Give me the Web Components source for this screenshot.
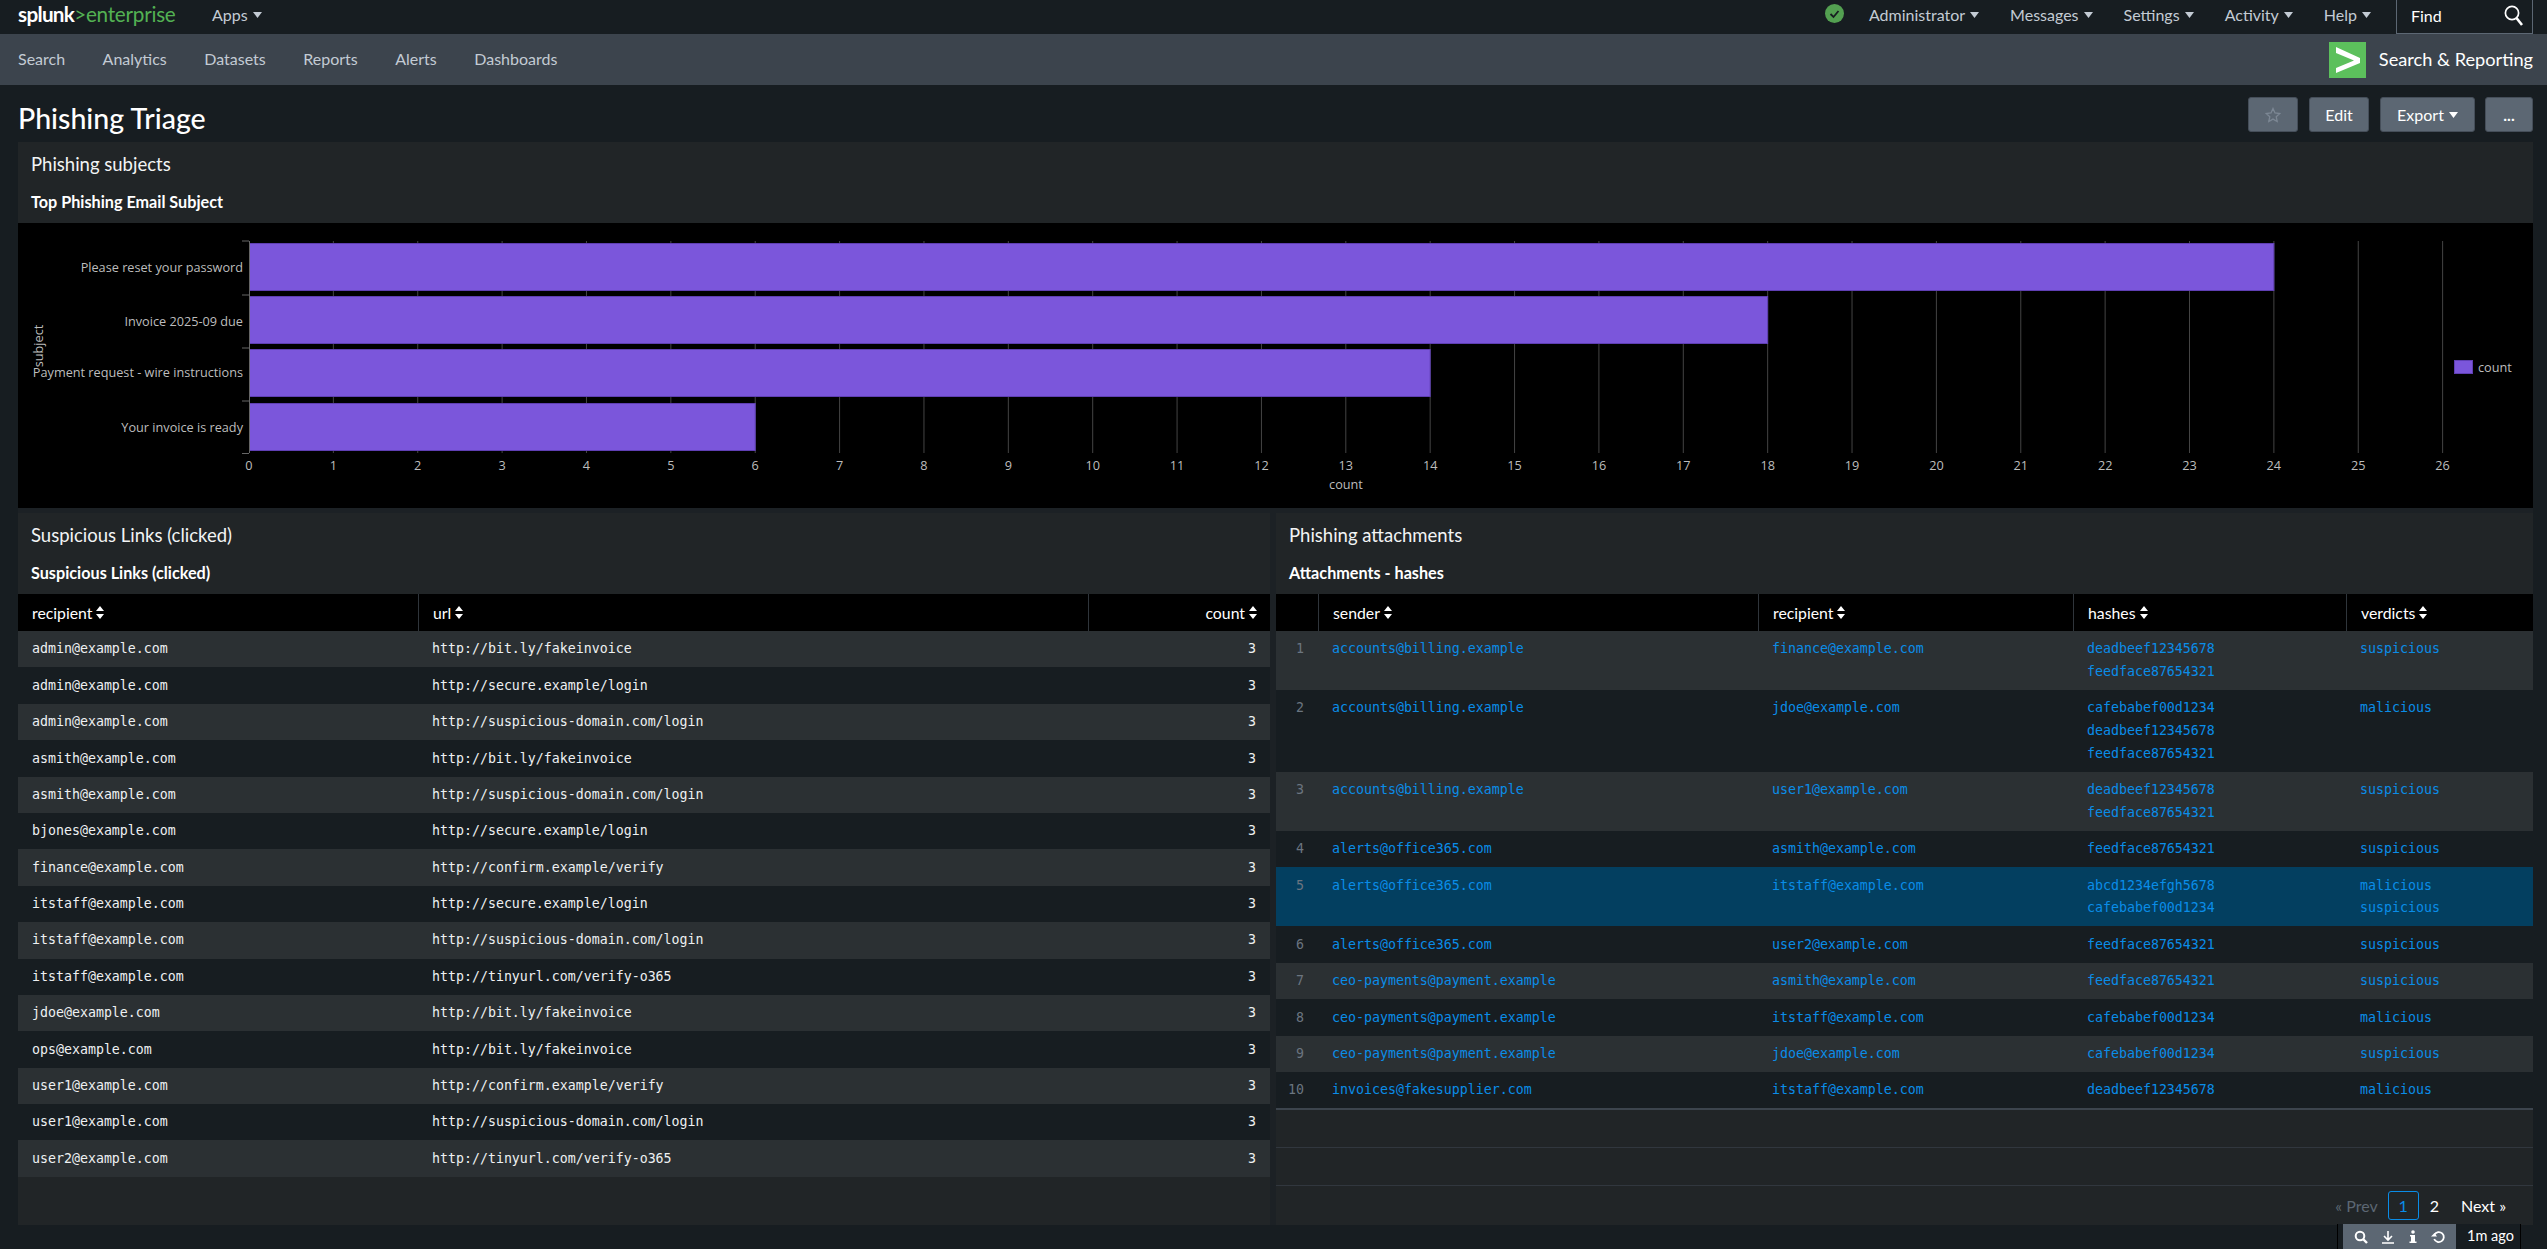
<!DOCTYPE html>
<html lang="en"><head><meta charset="utf-8"><title>Phishing Triage</title>
<style>
html,body{margin:0;padding:0;height:100%;background:#171d21;overflow:hidden}
body{font-family:Lato,"Liberation Sans",sans-serif;color:#fff}
spl-page{height:1249px}
</style></head><body>
<spl-page>
  <spl-topbar></spl-topbar>
  <spl-appbar></spl-appbar>
  <spl-dash-head heading="Phishing Triage"></spl-dash-head>
  <spl-dash>
    <spl-panel style="grid-column:1 / span 2" heading="Phishing subjects" sub="Top Phishing Email Subject"><spl-barchart></spl-barchart></spl-panel>
    <spl-panel heading="Suspicious Links (clicked)" sub="Suspicious Links (clicked)"><spl-table source="links"></spl-table></spl-panel>
    <spl-panel heading="Phishing attachments" sub="Attachments - hashes"><spl-table source="attachments"></spl-table><spl-pager></spl-pager></spl-panel>
  </spl-dash>
  <spl-footer-tab></spl-footer-tab>
</spl-page>
<script>
const FONT='Lato,"Liberation Sans",sans-serif';
const MONO='"DejaVu Sans Mono","Liberation Mono",monospace';
const caret=(c='#c3cbd4')=>`<svg width="9" height="6" viewBox="0 0 9 6" style="margin-left:5px;flex:none"><path d="M0 0h9L4.5 6z" fill="${c}"/></svg>`;
const sortIcon=`<svg width="8" height="13" viewBox="0 0 8 13" style="margin-left:4px;flex:none"><path d="M4 0l4 5H0zM4 13L0 8h8z" fill="#fff"/></svg>`;
function def(name,html,init){customElements.define(name,class extends HTMLElement{
  connectedCallback(){if(this.shadowRoot)return;const r=this.attachShadow({mode:'open'});r.innerHTML=typeof html==='function'?html(this):html;if(init)init(this,r);}
});}

def('spl-page',`<style>:host{display:flex;flex-direction:column;position:relative;width:2547px;font-family:${FONT}}</style><slot></slot>`);

def('spl-topbar',`<style>
:host{display:flex;align-items:center;height:34px;background:#171d21;color:#c3cbd4;font-size:16px;box-sizing:border-box;padding:0 14px 0 18px}
.logo{font-size:20.7px;line-height:28px;height:34px;color:#53b153;letter-spacing:-.25px;width:194px;white-space:nowrap}
.logo b{color:#fff;font-weight:700;letter-spacing:-.7px}
.item{display:flex;align-items:center;white-space:nowrap;padding-bottom:5px}
.right{margin-left:auto;display:flex;align-items:center;gap:31px}
.find{width:137px;height:34px;box-sizing:border-box;border:1px solid #5c6773;border-top:0;display:flex;align-items:center;justify-content:space-between;padding:0 8px 3px 14px;color:#fff;margin-left:-6px}
.ok{margin-right:-6px;display:block;margin-bottom:7px}
</style>
<div class="logo"><b>splunk</b>&gt;enterprise</div>
<div class="item">Apps${caret()}</div>
<div class="right">
<svg class="ok" width="19" height="19" viewBox="0 0 19 19"><circle cx="9.5" cy="9.5" r="9.5" fill="#53a051"/><path d="M5.5 10l3 3 5-6" fill="none" stroke="#171d21" stroke-width="1.8"/></svg>
<div class="item">Administrator${caret()}</div><div class="item">Messages${caret()}</div><div class="item">Settings${caret()}</div><div class="item">Activity${caret()}</div><div class="item">Help${caret()}</div>
<div class="find"><span>Find</span><svg width="20" height="21" viewBox="0 0 20 21"><circle cx="8" cy="8" r="6.6" fill="none" stroke="#fff" stroke-width="1.7"/><path d="M12.5 13l5.5 7" stroke="#fff" stroke-width="2.6"/></svg></div>
</div>`);

def('spl-appbar',`<style>
:host{display:flex;align-items:center;height:51px;box-sizing:border-box;padding:0 14px 2px 18px;background:#3c444d;color:#c3cbd4;font-size:16px;gap:37.5px}
.app{margin-left:auto;display:flex;align-items:center;gap:13px;color:#fff;font-size:18.2px}
svg{display:block;margin-top:2px}
</style>
<span>Search</span><span>Analytics</span><span>Datasets</span><span>Reports</span><span>Alerts</span><span>Dashboards</span>
<div class="app"><svg width="37" height="36" viewBox="0 0 37 36"><rect width="37" height="36" fill="#5cc05c"/><path d="M7 5l24 11v5L7 31v-5l18-7.500L7 11z" fill="#fff"/></svg><span>Search &amp; Reporting</span></div>`);

def('spl-dash-head',el=>`<style>
:host{display:flex;align-items:flex-start;height:57px;padding:12px 14px 0 18px;box-sizing:border-box}
h1{margin:4px 0 0;font-size:28.5px;font-weight:500;color:#fff}
.btns{margin-left:auto;display:flex;gap:11px}
.b{height:35px;box-sizing:border-box;background:#5c6773;border:1px solid #454e59;border-radius:3px;display:flex;align-items:center;justify-content:center;color:#fff;font-size:16px}
</style>
<h1>${el.getAttribute('heading')}</h1>
<div class="btns">
<div class="b" style="width:50px"><svg width="16" height="16" viewBox="0 0 16 16"><path d="M8 1.500l2 4.500 4.800.500-3.600 3.200 1 4.800L8 12.100l-4.200 2.400 1-4.800L1.200 6.500 6 6z" fill="none" stroke="#7c8794" stroke-width="1.300"/></svg></div>
<div class="b" style="width:60px">Edit</div>
<div class="b" style="width:95px">Export${caret('#fff')}</div>
<div class="b" style="width:48px;margin-left:-1px;align-items:flex-end;padding-bottom:8px;font-weight:700;line-height:1">...</div>
</div>`);

def('spl-dash',`<style>:host{display:grid;width:2515px;margin-left:18px;grid-template-columns:1252px 1257px;column-gap:6px;row-gap:5px;grid-template-rows:366px 712px;background:#1c2125}</style><slot></slot>`);

def('spl-panel',el=>`<style>
:host{display:flex;flex-direction:column;background:#212527;min-width:0;position:relative}
.t{height:44px;line-height:44px;padding:0 14px 0 13px;font-size:18.5px;color:#f2f4f5;white-space:nowrap}
.s{height:37px;line-height:31px;padding:0 13px;font-size:16.2px;font-weight:700;color:#fff;white-space:nowrap}
</style>
<div class="t">${el.getAttribute('heading')}</div><div class="s">${el.getAttribute('sub')}</div><slot></slot>`);

def('spl-barchart',()=>{
  const X0=249-18,S=84.37,top=241-223,bot=453-223;
  let s='';
  const txt='font-family="Open Sans,Lato,sans-serif" font-size="12.7" fill="#bdbdbd"';
  for(let i=1;i<=26;i++){const x=X0+S*i;s+=`<line x1="${x}" x2="${x}" y1="${top}" y2="${bot}" stroke="#444" stroke-width="1"/>`;}
  for(let i=0;i<=26;i++){const x=X0+S*i;s+=`<text x="${x}" y="${247}" text-anchor="middle" ${txt}>${i}</text>`;}
  const bars=[['Please reset your password',24,20,67],['Invoice 2025-09 due',18,73,120],['Payment request - wire instructions',14,126,173],['Your invoice is ready',6,180,227]];
  const cy=[49,103,154,209];
  bars.forEach((b,i)=>{s+=`<rect x="${X0+.5}" y="${b[2]+.5}" width="${S*b[1]-.5}" height="${b[3]-b[2]}" fill="#7b56db" stroke="#5f3fb3" stroke-width="1"/>`;
    s+=`<text x="225" y="${cy[i]}" text-anchor="end" ${txt}>${b[0]}</text>`;});
  s+=`<path d="M${X0}.5 18V230M${X0-7} 18h7M${X0-7} 72h7M${X0-7} 125h7M${X0-7} 178h7M${X0-7} 230.500h7" stroke="#666" fill="none"/>`;
  s+=`<text transform="translate(25,123) rotate(-90)" text-anchor="middle" ${txt}>subject</text>`;
  s+=`<text x="1328" y="266" text-anchor="middle" ${txt}>count</text>`;
  s+=`<rect x="2436.500" y="137.500" width="18" height="13" fill="#7b56db" stroke="#5f3fb3"/><text x="2460" y="149" ${txt}>count</text>`;
  return `<style>:host{display:block;height:285px;background:#000}svg{display:block}</style><svg width="2515" height="285" viewBox="0 0 2515 285">${s}</svg>`;
});

const DATA={
 links:{cols:'400px 670px 1fr',head:[['recipient'],['url'],['count','r']],link:false,
  rows:[['admin@example.com','http://bit.ly/fakeinvoice'],['admin@example.com','http://secure.example/login'],['admin@example.com','http://suspicious-domain.com/login'],['asmith@example.com','http://bit.ly/fakeinvoice'],['asmith@example.com','http://suspicious-domain.com/login'],['bjones@example.com','http://secure.example/login'],['finance@example.com','http://confirm.example/verify'],['itstaff@example.com','http://secure.example/login'],['itstaff@example.com','http://suspicious-domain.com/login'],['itstaff@example.com','http://tinyurl.com/verify-o365'],['jdoe@example.com','http://bit.ly/fakeinvoice'],['ops@example.com','http://bit.ly/fakeinvoice'],['user1@example.com','http://confirm.example/verify'],['user1@example.com','http://suspicious-domain.com/login'],['user2@example.com','http://tinyurl.com/verify-o365']].map(r=>[...r,'3'])},
 attachments:{cols:'42px 440px 315px 273px 1fr',head:[[''],['sender'],['recipient'],['hashes'],['verdicts']],link:true,selected:4,
  rows:[
  ['accounts@billing.example','finance@example.com',['deadbeef12345678','feedface87654321'],['suspicious']],
  ['accounts@billing.example','jdoe@example.com',['cafebabef00d1234','deadbeef12345678','feedface87654321'],['malicious']],
  ['accounts@billing.example','user1@example.com',['deadbeef12345678','feedface87654321'],['suspicious']],
  ['alerts@office365.com','asmith@example.com',['feedface87654321'],['suspicious']],
  ['alerts@office365.com','itstaff@example.com',['abcd1234efgh5678','cafebabef00d1234'],['malicious','suspicious']],
  ['alerts@office365.com','user2@example.com',['feedface87654321'],['suspicious']],
  ['ceo-payments@payment.example','asmith@example.com',['feedface87654321'],['suspicious']],
  ['ceo-payments@payment.example','itstaff@example.com',['cafebabef00d1234'],['malicious']],
  ['ceo-payments@payment.example','jdoe@example.com',['cafebabef00d1234'],['suspicious']],
  ['invoices@fakesupplier.com','itstaff@example.com',['deadbeef12345678'],['malicious']]]}
};

def('spl-table',el=>{
  const d=DATA[el.getAttribute('source')];
  const head=d.head.map(h=>`<div class="h ${h[1]||''}">${h[0]?`<span>${h[0]}</span>${sortIcon}`:''}</div>`).join('');
  const rows=d.rows.map((r,i)=>{
    const cells=d.link?[`<div class="c n">${i+1}</div>`,...r.map(v=>`<div class="c a">${[].concat(v).map(x=>`<div>${x}</div>`).join('')}</div>`)]:r.map((v,j)=>`<div class="c ${j==2?'r':''}"><div>${v}</div></div>`);
    return `<div class="row ${i%2?'':'odd'} ${d.selected===i?'sel':''}">${cells.join('')}</div>`;
  }).join('');
  return `<style>
  :host{display:block}
  .row,.hd{display:grid;grid-template-columns:${d.cols}}
  .hd{background:#000;height:37px}
  .h{display:flex;align-items:center;padding:0 14px;color:#fff;font-size:15.8px;border-left:1px solid #2f353b;box-sizing:border-box;padding-bottom:1px}
  .h:first-child{border-left:0}
  .h.r{justify-content:flex-end;padding-right:13px}
  .row{background:#171d21;font:13.28px/22.7px ${MONO};color:#eef0f2}
  .row.odd{background:#2b3033}
  .row.sel{background:#033f60}
  .c{padding:7.35px 14px 6.35px 14px;box-sizing:border-box;white-space:nowrap;min-width:0}
  .c.r{text-align:right;padding-right:14px}
  .a{color:#0a8de8}
  .n{color:#6b7580;text-align:right;padding:7.35px 14px 6.35px 0}
  </style><div class="hd">${head}</div>${rows}`;
});

def('spl-pager',`<style>
:host{display:block;position:absolute;left:0;right:0;bottom:0;height:117px;border-top:2px solid #3c444d;box-sizing:border-box}
.l{height:37px;border-bottom:1px solid #31373e}
.p{display:flex;align-items:center;justify-content:flex-end;height:39px;box-sizing:border-box;padding:0 27px 1px 0;font-size:16px;color:#fff}
.dis{color:#5c6773;margin-right:10px}
.cur{width:31px;height:29px;box-sizing:border-box;border:1px solid #0a8de8;border-radius:3px;color:#0a8de8;display:flex;align-items:center;justify-content:center}
.two{margin:0 22px 0 11px}
</style><div class="l"></div><div class="l"></div><div class="p"><span class="dis">« Prev</span><span class="cur">1</span><span class="two">2</span><span>Next »</span></div>`);

def('spl-footer-tab',`<style>
:host{display:flex;position:absolute;left:2337px;top:1224px;width:184px;height:25px;box-sizing:border-box;background:#171d21;border-left:1px solid #000;border-right:1px solid #000;padding-left:5px;align-items:stretch;color:#fff;font-size:14.5px}
.g{width:113px;background:#5c6773;display:flex;align-items:center;justify-content:space-around;padding:0 4px;box-sizing:border-box}
.t{margin-left:11px;line-height:24px}
svg{display:block}
</style>
<div class="g">
<svg width="14" height="14" viewBox="0 0 14 14"><circle cx="6" cy="6" r="4.300" fill="none" stroke="#fff" stroke-width="2"/><path d="M9 9l4 4" stroke="#fff" stroke-width="2.400"/></svg>
<svg width="14" height="14" viewBox="0 0 14 14"><path d="M7 1v8M3 6l4 4 4-4M1 13h12" fill="none" stroke="#fff" stroke-width="1.600"/></svg>
<svg width="10" height="14" viewBox="0 0 10 14"><circle cx="5" cy="2" r="1.800" fill="#fff"/><path d="M2 5h5v6.500h1.500V13h-7v-1.500H3V6.500H2z" fill="#fff"/></svg>
<svg width="15" height="14" viewBox="0 0 15 14"><path d="M3.500 4.500a5 5 0 1 1-.3 4.500" fill="none" stroke="#fff" stroke-width="1.800"/><path d="M0 6.500h6L3.500 3z" fill="#fff"/></svg>
</div><div class="t">1m ago</div>`);
</script>
</body></html>
